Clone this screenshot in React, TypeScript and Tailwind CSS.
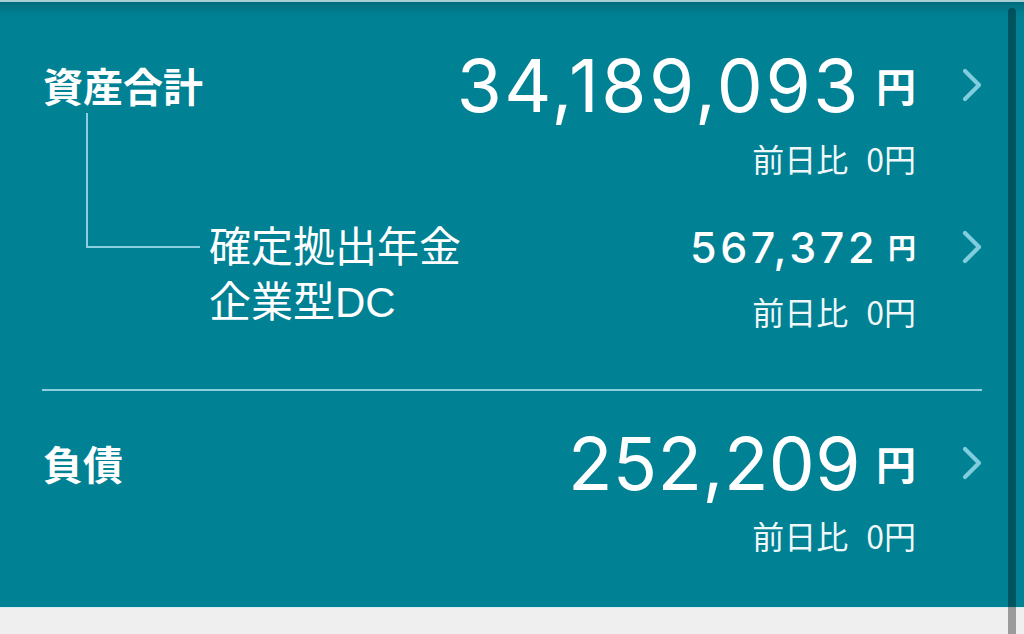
import React from "react";

const num = "font-['Inter','Noto_Sans_CJK_JP',sans-serif]";
const jp = "font-['Noto_Sans_CJK_JP','Inter',sans-serif]";

function Chevron() {
  return (
    <svg width="20" height="34" viewBox="0 0 20 34" className="shrink-0">
      <polyline
        points="3,3 17,17 3,31"
        fill="none"
        stroke="#7fcddd"
        strokeWidth="4.2"
        strokeLinecap="round"
        strokeLinejoin="round"
      />
    </svg>
  );
}

function DayDiff({ className = "" }: { className?: string }) {
  return (
    <div className={`flex justify-end pr-[66px] ${className}`}>
      <div className={`${jp} flex h-[32px] items-center text-[32px] leading-none text-white/95`}>
        <span>前日比</span>
        <span className="ml-[18px]">0円</span>
      </div>
    </div>
  );
}

function BigAmount({ value, tracking }: { value: string; tracking: string }) {
  return (
    <div className="flex h-[76px] items-center gap-[46px]">
      <div className="flex items-center">
        <span className={`${num} whitespace-nowrap text-[73px] leading-none text-white ${tracking}`}>{value}</span>
        <span className={`${jp} ml-[15px] text-[40px] font-bold leading-none text-white`}>円</span>
      </div>
      <Chevron />
    </div>
  );
}

export default function App() {
  return (
    <div className="relative h-[634px] w-[1024px] overflow-hidden bg-[#efefef]">
      <div className="h-[2px] bg-[#a9cdd4]" />
      <section className="h-[605px] bg-[linear-gradient(to_bottom,#006b7b_0px,#017d8f_10px,#018194_16px)] px-[42px] pt-[45px]">
        <div className="flex justify-between">
          {/* left column */}
          <div className="flex min-w-0 flex-col pl-px">
            <div className={`${jp} flex h-[76px] items-center whitespace-nowrap text-[40px] font-bold leading-none text-white`}>
              資産合計
            </div>
            <div className="flex">
              <div className="ml-[43px] -mt-[10px] h-[135px] w-[114px] shrink-0 border-b-2 border-l-2 border-[#8ccfdf]" />
              <div className={`${jp} ml-[9px] mt-[93px] whitespace-nowrap text-[42px] leading-[55px] text-white`}>
                <div>確定拠出年金</div>
                <div>
                  企業型<span className="font-['Liberation_Sans',sans-serif]">DC</span>
                </div>
              </div>
            </div>
          </div>

          {/* right column */}
          <div className="flex shrink-0 flex-col items-end">
            <BigAmount value="34,189,093" tracking="tracking-[2.6px]" />
            <DayDiff className="mt-[19px] self-stretch" />
            <div className="mt-[53px] flex h-[40px] items-center gap-[46px]">
              <div className="flex items-center">
                <span className={`${num} text-[43px] font-medium leading-none tracking-[3.6px] text-white`}>567,372</span>
                <span className={`${jp} ml-[10px] text-[28px] font-bold leading-none text-white`}>円</span>
              </div>
              <Chevron />
            </div>
            <DayDiff className="mt-[28px] self-stretch" />
          </div>
        </div>

        <div className="mt-[59px] h-[2px] bg-[#8ccfdf]" />

        <div className="mt-[34px] flex justify-between">
          <div className={`${jp} flex h-[76px] items-center pl-px text-[40px] font-bold leading-none text-white`}>
            負債
          </div>
          <BigAmount value="252,209" tracking="tracking-[0.4px]" />
        </div>
        <DayDiff className="mt-[18px]" />
      </section>
      <div className="h-px bg-[#d7ecf0]" />

      {/* scrollbar overlay */}
      <div className="absolute left-[1008px] top-[8px] h-[640px] w-[8px] rounded-full bg-black/35" />
    </div>
  );
}
